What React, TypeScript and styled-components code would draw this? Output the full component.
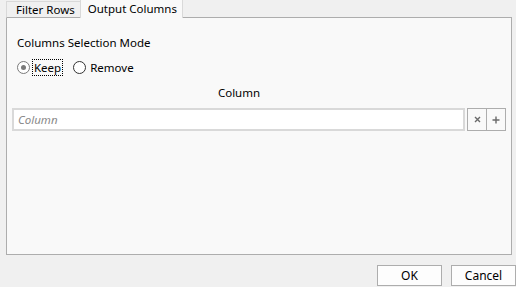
import React from "react";
import styled, { createGlobalStyle } from "styled-components";

const Global = createGlobalStyle`
  html, body { margin: 0; padding: 0; background: #f0f0f0; }
  body { font-family: "Noto Sans", "Open Sans", sans-serif; font-size: 11.5px; color: #000; }
`;

const Window = styled.div`
  width: 516px;
  height: 287px;
  display: flex;
  flex-direction: column;
  box-sizing: border-box;
  overflow: hidden;
`;

const TabStrip = styled.div`
  display: flex;
  align-items: flex-end;
  height: 18px;
  padding-left: 6px;
  margin-bottom: -1px;
  position: relative;
  z-index: 1;
`;

const Tab = styled.div<{ $active?: boolean }>`
  box-sizing: border-box;
  height: ${(p) => (p.$active ? "19px" : "17px")};
  padding: ${(p) => (p.$active ? "0 5px 0 7px" : "0 5px 0 9px")};
  display: flex;
  align-items: center;
  background: ${(p) => (p.$active ? "#f9f9f9" : "#f0f0f0")};
  border: 1px solid #d9d9d9;
  border-bottom: ${(p) => (p.$active ? "none" : "1px solid #adadad")};
  margin-left: ${(p) => (p.$active ? "-1px" : "0")};
  line-height: 1;
  white-space: nowrap;
`;

const Panel = styled.div`
  margin: 0 4px 0 6px;
  height: 238px;
  box-sizing: border-box;
  background: #f9f9f9;
  border: 1px solid #adadad;
  padding: 17px 5px 0 5px;
  display: flex;
  flex-direction: column;
`;

const GroupLabel = styled.div`
  padding-left: 5px;
  line-height: 16px;
`;

const RadioRow = styled.div`
  display: flex;
  align-items: center;
  gap: 11px;
  padding-left: 5px;
  margin-top: 7px;
  height: 18px;
`;

const RadioOption = styled.label`
  display: flex;
  align-items: center;
  gap: 3px;
`;

const RadioCircle = styled.span<{ $checked?: boolean }>`
  width: 11px;
  height: 11px;
  border-radius: 50%;
  border: 1px solid ${(p) => (p.$checked ? "#7a7a7a" : "#333")};
  background: #fff;
  display: flex;
  align-items: center;
  justify-content: center;
  &::after {
    content: "";
    width: 5px;
    height: 5px;
    border-radius: 50%;
    background: ${(p) => (p.$checked ? "#7a7a7a" : "transparent")};
  }
`;

const RadioText = styled.span<{ $focus?: boolean }>`
  padding: 0 1px;
  line-height: 15px;
  outline: ${(p) => (p.$focus ? "1px dotted #000" : "none")};
`;

const ColumnHeader = styled.div`
  text-align: center;
  margin-top: 9px;
  line-height: 16px;
  padding-right: 40px;
`;

const InputRow = styled.div`
  display: flex;
  align-items: stretch;
  margin-top: 7px;
  height: 23px;
`;

const TextInput = styled.div`
  flex: 1;
  box-sizing: border-box;
  background: #fff;
  border: 2px solid #d9d9d9;
  display: flex;
  align-items: center;
  padding-left: 4px;
  font-style: italic;
  color: #8a8a8a;
  margin-right: 2px;
`;

const IconButton = styled.button`
  width: 20px;
  box-sizing: border-box;
  background: #f9f9f9;
  border: 1px solid #adadad;
  margin-left: -1px;
  padding: 0;
  display: flex;
  align-items: center;
  justify-content: center;
  color: #6a6a6a;
  &:first-of-type { margin-left: 0; }
`;

const Footer = styled.div`
  flex: 1;
  display: flex;
  justify-content: flex-end;
  align-items: flex-end;
  gap: 9px;
  padding: 0 0 1px 0;
`;

const DialogButton = styled.button`
  width: 65px;
  height: 21px;
  box-sizing: border-box;
  background: #fdfdfd;
  border: 1px solid #adadad;
  font-family: inherit;
  font-size: 12px;
  color: #000;
  padding: 0;
`;

export default function App() {
  return (
    <Window>
      <Global />
      <TabStrip>
        <Tab>Filter Rows</Tab>
        <Tab $active>Output Columns</Tab>
      </TabStrip>
      <Panel>
        <GroupLabel>Columns Selection Mode</GroupLabel>
        <RadioRow>
          <RadioOption>
            <RadioCircle $checked />
            <RadioText $focus>Keep</RadioText>
          </RadioOption>
          <RadioOption>
            <RadioCircle />
            <RadioText>Remove</RadioText>
          </RadioOption>
        </RadioRow>
        <ColumnHeader>Column</ColumnHeader>
        <InputRow>
          <TextInput>Column</TextInput>
          <IconButton>
            <svg width="7" height="7" viewBox="0 0 7 7">
              <path d="M1 1L6 6M6 1L1 6" stroke="#6a6a6a" strokeWidth="1.4" />
            </svg>
          </IconButton>
          <IconButton>
            <svg width="8" height="8" viewBox="0 0 8 8">
              <path d="M4 0.5V7.5M0.5 4H7.5" stroke="#6a6a6a" strokeWidth="1.4" />
            </svg>
          </IconButton>
        </InputRow>
      </Panel>
      <Footer>
        <DialogButton>OK</DialogButton>
        <DialogButton>Cancel</DialogButton>
      </Footer>
    </Window>
  );
}
